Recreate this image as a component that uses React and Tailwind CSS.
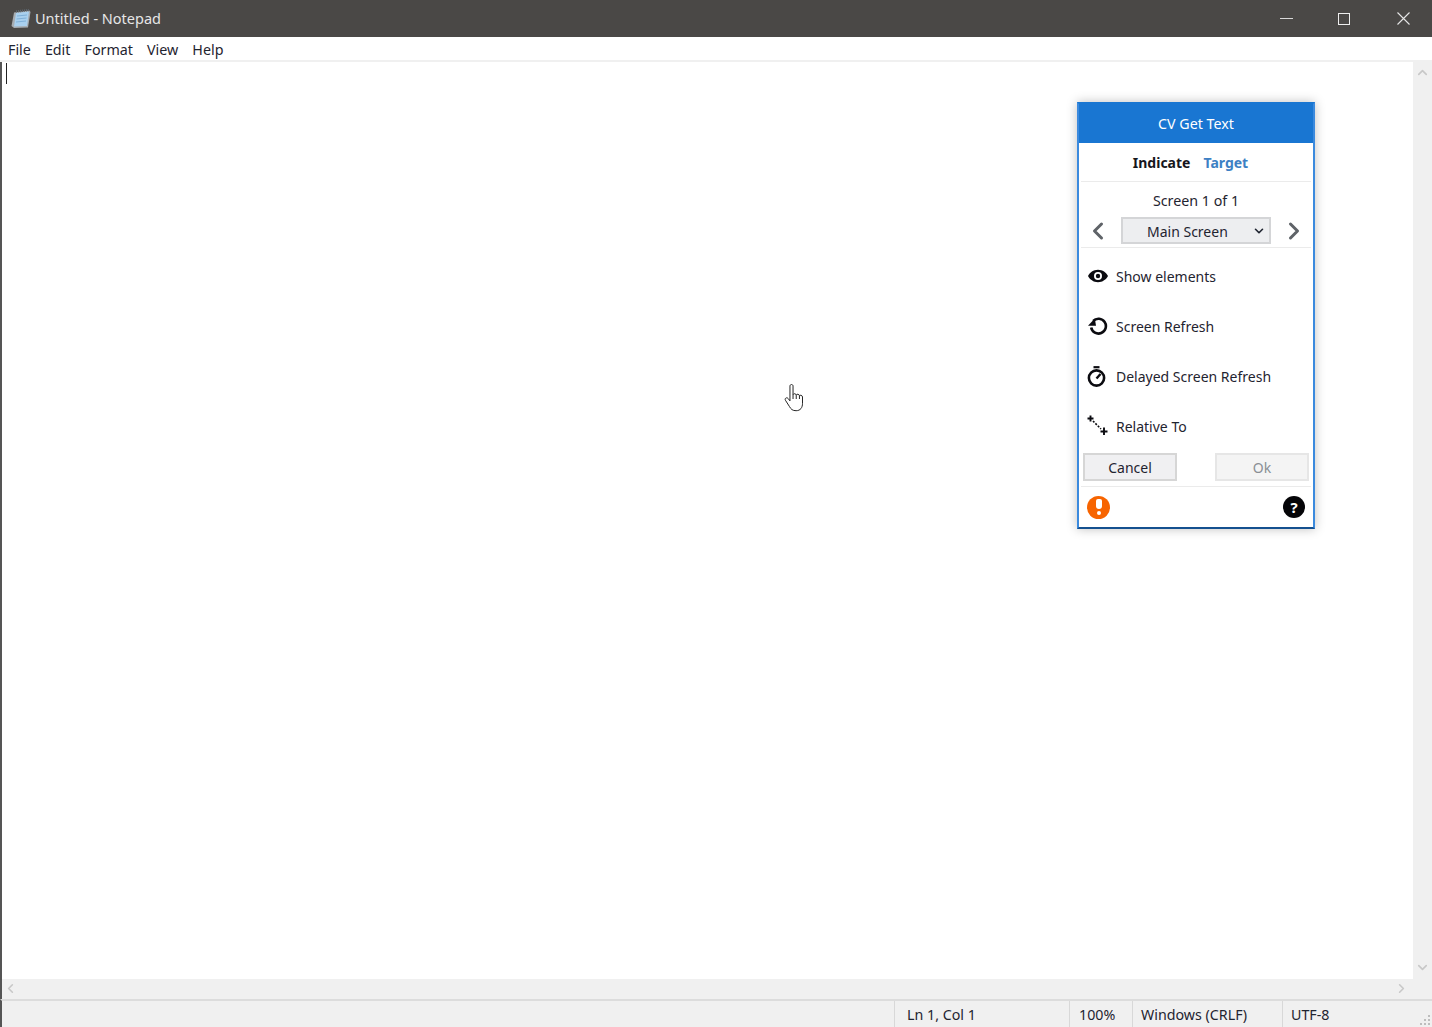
import React from 'react';
import { ChevronDown, ChevronLeft, ChevronRight, ChevronUp } from 'lucide-react';

const FONT = 'font-["Noto_Sans","Open_Sans",sans-serif]';

const NotepadIcon = () => (
  <svg width="20" height="20" viewBox="0 0 20 20">
    <path d="M3 3.5 L18.5 1.5 L19.5 3 L17 18.5 L3 19 L0.5 17 Z" fill="#a7adb2" />
    <path d="M5 4 L18 2.5 L16 17 L3 17.5 Z" fill="#a9d0ee" />
    <path d="M5 2.5 L18.5 1" stroke="#5f6870" strokeWidth="2.4" strokeDasharray="1 1" />
    <path d="M6 7 L16 6 M5.5 10 L15.5 9 M5 13 L15 12" stroke="#7fb0d8" strokeWidth="1" />
  </svg>
);

const EyeIcon = () => (
  <svg width="20" height="14" viewBox="0 0 20 14">
    <path fillRule="evenodd" d="M10 0.8 C5.4 0.8 1.8 3.6 0 7 C1.8 10.4 5.4 13.2 10 13.2 C14.6 13.2 18.2 10.4 20 7 C18.2 3.6 14.6 0.8 10 0.8 Z M10 3 A4 4 0 1 1 10 11 A4 4 0 1 1 10 3 Z" fill="#0b0b10" />
    <circle cx="10" cy="7" r="2.2" fill="#0b0b10" />
  </svg>
);

const RefreshIcon = () => (
  <svg width="20" height="20" viewBox="0 0 20 20" fill="none">
    <path d="M5.2 5 A7.4 7.4 0 1 1 3.2 11.5" stroke="#0b0b10" strokeWidth="2.6" />
    <path d="M0 9.8 L8 9.8 L6.8 2.5 Z" fill="#0b0b10" />
  </svg>
);

const TimerIcon = () => (
  <svg width="20" height="21" viewBox="0 0 20 21" fill="none" className="-translate-x-[1px]">
    <circle cx="9.5" cy="12" r="7.6" stroke="#0b0b10" strokeWidth="2.6" />
    <path d="M6.5 1.2 H12.5" stroke="#0b0b10" strokeWidth="2.2" />
    <path d="M9.5 12.5 L13.5 8" stroke="#0b0b10" strokeWidth="2.4" />
  </svg>
);

const RelativeIcon = () => (
  <svg width="22" height="22" viewBox="0 0 22 22" fill="none">
    <path d="M3.5 0.5 V6.5 M0.5 3.5 H6.5" stroke="#0b0b10" strokeWidth="1.9" />
    <path d="M17 12.5 V20 M13.5 16.5 H20.5" stroke="#0b0b10" strokeWidth="1.9" />
    <path d="M6 6 L14 14" stroke="#0b0b10" strokeWidth="1.6" strokeDasharray="2 1.4" />
  </svg>
);

const HandCursor = () => (
  <svg width="25" height="32" viewBox="0 0 20 26" fill="#fff" stroke="#222" strokeWidth="0.8" strokeLinejoin="round">
    <path d="M5.5 2.5 C5.5 0.8 8 0.8 8 2.5 V9.5 C8.4 8.4 10.4 8.4 10.6 9.8 C11 8.8 13 8.8 13.2 10.4 C13.6 9.6 15.6 9.8 15.7 11.4 V16.5 C15.7 20 14 22.5 10.5 22.5 C7.5 22.5 6.4 21.4 5 19 L1.8 14 C1 12.6 2.8 11.2 4 12.6 L5.5 14.5 Z" />
    <path d="M8 9.5 V13 M10.6 9.8 V13 M13.2 10.4 V13" fill="none" />
  </svg>
);

const ActionRow = ({ icon, label }) => (
  <div className="flex h-[50px] items-center">
    <div className="flex w-[37px] shrink-0 justify-center">{icon}</div>
    <span className="text-[14px] text-[#1f2430]">{label}</span>
  </div>
);

const CvDialog = () => (
  <div className={`absolute left-[1077px] top-[102px] flex h-[427px] w-[238px] flex-col border-2 border-x-[#3b8ade] border-t-[#1976d2] border-b-[#14508f] bg-white shadow-[0_0_10px_rgba(0,0,0,0.25)] ${FONT}`}>
    <div className="flex h-[39px] shrink-0 items-center justify-center bg-[#1976d2] text-[14.25px] text-white">CV Get Text</div>
    <div className="mx-[2px] flex h-[39px] shrink-0 items-center justify-center gap-[13px] border-b border-[#ebebeb] pr-[11px] pt-[1px] text-[14px] font-bold">
      <span className="text-[#16161c]">Indicate</span>
      <span className="text-[#3d80c4]">Target</span>
    </div>
    <div className="flex h-[35px] shrink-0 items-center justify-center pt-[3px] text-[14.25px] text-[#1f2430]">Screen 1 of 1</div>
    <div className="mx-[2px] flex h-[31px] shrink-0 items-start border-b border-[#ebebeb]">
      <div className="flex w-[40px] shrink-0 justify-center pr-[6px]">
        <ChevronLeft size={28} strokeWidth={2.6} className="text-[#5f6368]" />
      </div>
      <div className="flex h-[27px] w-[150px] shrink-0 items-center justify-between border-2 border-[#d4d5d7] bg-[#edeef0] pl-[24px] pr-[3px] pt-[1px] text-[14px] text-[#1f2430]">
        <span>Main Screen</span>
        <ChevronDown size={14} strokeWidth={2.8} className="text-[#1f2430]" />
      </div>
      <div className="flex w-[40px] shrink-0 justify-center pl-[5px]">
        <ChevronRight size={28} strokeWidth={2.6} className="text-[#5f6368]" />
      </div>
    </div>
    <div className="flex shrink-0 flex-col pt-[3px]">
      <ActionRow icon={<EyeIcon />} label="Show elements" />
      <ActionRow icon={<RefreshIcon />} label="Screen Refresh" />
      <ActionRow icon={<TimerIcon />} label="Delayed Screen Refresh" />
      <ActionRow icon={<RelativeIcon />} label="Relative To" />
    </div>
    <div className="mx-[2px] flex h-[36px] shrink-0 items-start justify-between border-b border-[#ebebeb] px-[2px] pt-[2px]">
      <div className="flex h-[28px] w-[94px] items-center justify-center border-2 border-[#d6d6d6] bg-[#f0f0f2] pt-[1px] text-[14px] text-[#1f2430]">Cancel</div>
      <div className="flex h-[28px] w-[94px] items-center justify-center border-2 border-[#e6e6e6] bg-[#f4f4f4] pt-[1px] text-[14px] text-[#8a8f94]">Ok</div>
    </div>
    <div className="flex flex-1 items-center justify-between pl-[8px] pr-[8px]">
      <div className="flex h-[23px] w-[23px] flex-col items-center justify-center gap-[1.5px] rounded-full bg-[#f76400]">
        <div className="h-[10px] w-[6px] rounded-b-[3px] rounded-t-[2px] bg-white" />
        <div className="h-[4px] w-[4px] rounded-full bg-white" />
      </div>
      <div className="flex h-[22px] w-[22px] items-center justify-center rounded-full bg-[#050508] text-[15px] font-bold leading-none text-white">?</div>
    </div>
  </div>
);

export default function App() {
  return (
    <div className={`relative flex h-[1027px] w-[1432px] flex-col overflow-hidden bg-white ${FONT}`}>
      <div className="flex h-[37px] shrink-0 items-center justify-between bg-[#4a4846]">
        <div className="flex items-center gap-[4px] pl-[11px]">
          <NotepadIcon />
          <span className="text-[14.5px] text-[#e6e6e6]">Untitled - Notepad</span>
        </div>
        <div className="flex items-center text-[#e4e4e4]">
          <div className="flex w-[56px] justify-center"><div className="h-[1px] w-[13px] bg-[#d8d8d8]" /></div>
          <div className="flex w-[60px] justify-center"><div className="h-[12px] w-[12px] border border-[#eeeeee]" /></div>
          <div className="flex w-[58px] justify-center">
            <svg width="13" height="13" viewBox="0 0 13 13" stroke="#e6e6e6" strokeWidth="1.1"><path d="M0.5 0.5 L12.5 12.5 M12.5 0.5 L0.5 12.5" /></svg>
          </div>
        </div>
      </div>
      <div className="flex h-[25px] shrink-0 items-center gap-[14px] border-b-2 border-[#f0f0f0] pl-[8px] pt-[2px] text-[14.3px] text-[#1f2430]">
        <span>File</span>
        <span>Edit</span>
        <span>Format</span>
        <span>View</span>
        <span>Help</span>
      </div>
      <div className="flex min-h-0 flex-1 border-l-2 border-[#555555]">
        <div className="min-w-0 flex-1 pl-[4px] pt-[1px]">
          <div className="h-[21px] w-[1px] bg-[#222222]" />
        </div>
        <div className="flex w-[19px] shrink-0 flex-col items-center justify-between bg-[#f0f0f0] pb-[4px] pt-[3px]">
          <ChevronUp size={15} strokeWidth={2.6} className="text-[#c8c8c8]" />
          <ChevronDown size={15} strokeWidth={2.6} className="text-[#c8c8c8]" />
        </div>
      </div>
      <div className="flex h-[20px] shrink-0 items-center justify-between border-l-2 border-[#555555] bg-[#f0f0f0] pb-[2px] pl-[1px] pr-[23px]">
        <ChevronLeft size={15} strokeWidth={2.6} className="text-[#c8c8c8]" />
        <ChevronRight size={15} strokeWidth={2.6} className="text-[#c8c8c8]" />
      </div>
      <div className="flex h-[28px] shrink-0 items-stretch border-l-2 border-t-2 border-l-[#555555] border-t-[#dcdcdc] bg-[#f0f0f0] text-[14.25px] text-[#1f2430]">
        <div className="flex-1" />
        <div className="flex w-[175px] items-center border-l border-[#d8d8d8] pl-[12px] pt-[2px]">Ln 1, Col 1</div>
        <div className="flex w-[63px] items-center border-l border-[#d8d8d8] pl-[9px] pt-[2px]">100%</div>
        <div className="flex w-[150px] items-center border-l border-[#d8d8d8] pl-[8px] pt-[2px]">Windows (CRLF)</div>
        <div className="relative flex w-[150px] items-center border-l border-[#d8d8d8] pl-[8px] pt-[2px]">
          UTF-8
          <svg className="absolute bottom-[1px] right-[1px]" width="11" height="11" viewBox="0 0 11 11" fill="#bdbdbd">
            <rect x="8" y="0" width="2" height="2" />
            <rect x="4" y="4" width="2" height="2" />
            <rect x="8" y="4" width="2" height="2" />
            <rect x="0" y="8" width="2" height="2" />
            <rect x="4" y="8" width="2" height="2" />
            <rect x="8" y="8" width="2" height="2" />
          </svg>
        </div>
      </div>
      <CvDialog />
      <div className="absolute left-[783px] top-[383px]">
        <HandCursor />
      </div>
    </div>
  );
}
